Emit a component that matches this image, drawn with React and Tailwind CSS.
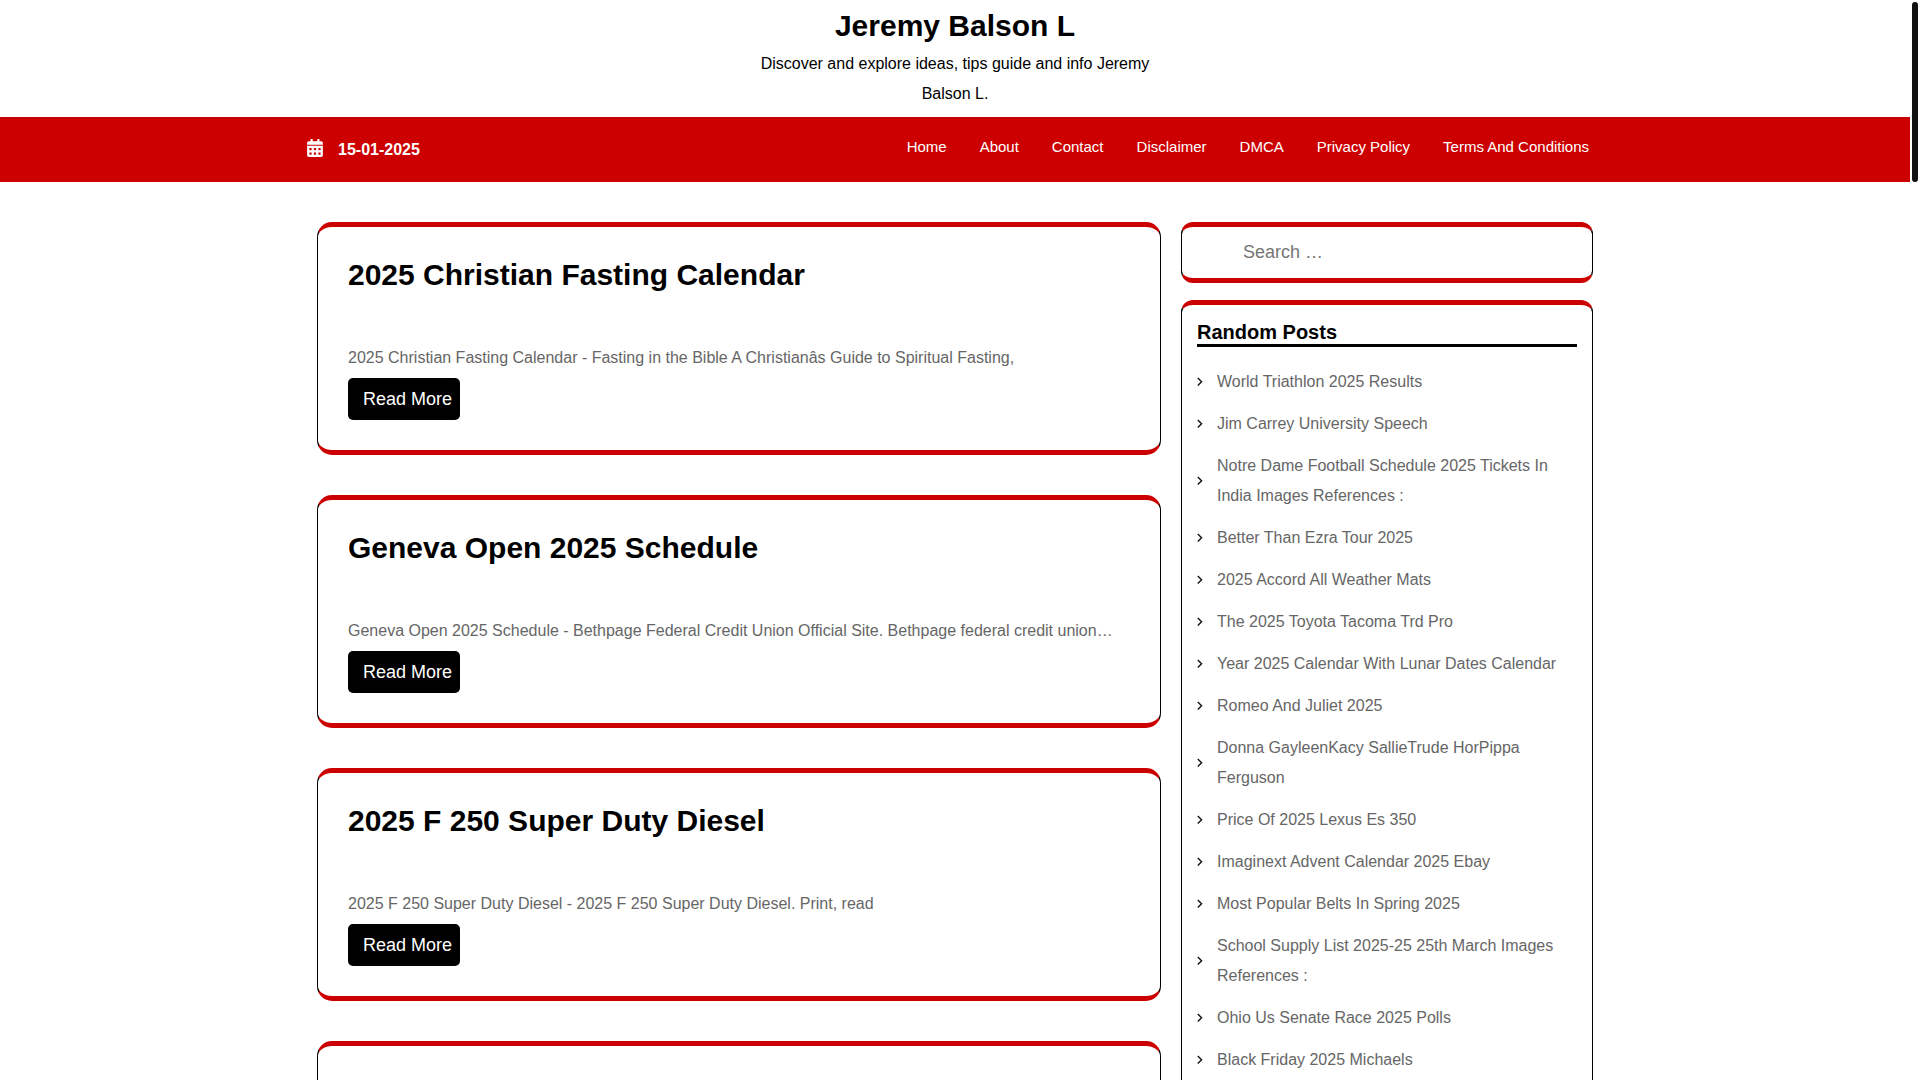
import { FaCalendarAlt } from "react-icons/fa";

const navLinks = ["Home", "About", "Contact", "Disclaimer", "DMCA", "Privacy Policy", "Terms And Conditions"];

const posts = [
  {
    title: "2025 Christian Fasting Calendar",
    excerpt: "2025 Christian Fasting Calendar - Fasting in the Bible A Christianâs Guide to Spiritual Fasting,",
  },
  {
    title: "Geneva Open 2025 Schedule",
    excerpt: "Geneva Open 2025 Schedule - Bethpage Federal Credit Union Official Site. Bethpage federal credit union…",
  },
  {
    title: "2025 F 250 Super Duty Diesel",
    excerpt: "2025 F 250 Super Duty Diesel - 2025 F 250 Super Duty Diesel. Print, read",
  },
];

const randomPosts = [
  "World Triathlon 2025 Results",
  "Jim Carrey University Speech",
  "Notre Dame Football Schedule 2025 Tickets In India Images References :",
  "Better Than Ezra Tour 2025",
  "2025 Accord All Weather Mats",
  "The 2025 Toyota Tacoma Trd Pro",
  "Year 2025 Calendar With Lunar Dates Calendar",
  "Romeo And Juliet 2025",
  "Donna GayleenKacy SallieTrude HorPippa Ferguson",
  "Price Of 2025 Lexus Es 350",
  "Imaginext Advent Calendar 2025 Ebay",
  "Most Popular Belts In Spring 2025",
  "School Supply List 2025-25 25th March Images References :",
  "Ohio Us Senate Race 2025 Polls",
  "Black Friday 2025 Michaels",
];

function Card({ as: Tag = "div", className, children }) {
  return (
    <Tag className={`border-x border-y-[5px] border-x-black border-y-[#cc0000] bg-white ${className}`}>{children}</Tag>
  );
}

function Chevron() {
  return (
    <svg viewBox="0 0 6 10" className="h-2.5 w-1.5 shrink-0" fill="none" stroke="#111" strokeWidth="1.4" aria-hidden="true">
      <path d="M0.8 1 L4.6 4.8 L0.8 8.6" />
    </svg>
  );
}

function Header() {
  return (
    <header>
      <div className="mx-auto max-w-104 py-2 text-center text-black">
        <h1 className="mb-[5px] text-[30px] leading-9 font-bold">
          <a href="#home">Jeremy Balson L</a>
        </h1>
        <p className="text-base leading-[30px]">Discover and explore ideas, tips guide and info Jeremy Balson L.</p>
      </div>
      <div className="bg-[#cc0000] text-white">
        <div className="mx-auto flex h-[65px] max-w-[1320px] items-center justify-between px-3">
          <div className="flex items-start gap-[15px]">
            <FaCalendarAlt size={18} className="w-4" aria-hidden="true" />
            <span className="text-base leading-[22px] font-bold">15-01-2025</span>
          </div>
          <nav className="pr-3.5 pb-1.5">
            <ul className="flex gap-[33px]">
              {navLinks.map((label) => (
                <li key={label}>
                  <a href="#nav" className="text-[15px]">{label}</a>
                </li>
              ))}
            </ul>
          </nav>
        </div>
      </div>
    </header>
  );
}

function Post({ title, excerpt }) {
  return (
    <Card as="article" className="rounded-[15px] p-[30px]">
      <h2 className="text-[30px] leading-9 font-bold text-black">
        <a href="#post">{title}</a>
      </h2>
      <p className="mt-[50px] text-base leading-[30px] text-[#666]">{excerpt}</p>
      <a href="#post" className="mt-[5px] flex h-[42px] w-28 items-center rounded-[5px] bg-black pl-[15px] text-lg whitespace-nowrap text-white">
        Read More
      </a>
    </Card>
  );
}

function Sidebar() {
  return (
    <aside className="flex min-w-0 flex-col gap-[17px]">
      <Card as="form" className="rounded-[12px]">
        <input
          type="search"
          aria-label="Search"
          placeholder="Search …"
          className="block h-[51px] w-full bg-transparent pr-4 pl-[61px] text-lg text-black outline-none placeholder:text-[#757575]"
        />
      </Card>
      <Card as="section" className="grow rounded-[12px] px-[15px] pt-[15px] pb-10">
        <h2 className="border-b-3 border-black text-xl leading-6 font-bold text-black">Random Posts</h2>
        <ul className="mt-5 flex flex-col gap-3">
          {randomPosts.map((post) => (
            <li key={post} className="flex items-center gap-3.5">
              <Chevron />
              <a href="#post" className="text-base leading-[30px] text-[#666]">{post}</a>
            </li>
          ))}
        </ul>
      </Card>
    </aside>
  );
}

export default function App() {
  return (
    <div className="flex h-screen overflow-hidden bg-white font-['Liberation_Sans',Arial,sans-serif]">
      <div className="min-w-0 grow overflow-hidden">
        <Header />
        <div className="mx-auto grid max-w-[1320px] grid-cols-[844fr_412fr] gap-5 px-[22px] pt-10">
          <main className="flex min-w-0 flex-col gap-10">
            {posts.map((post) => (
              <Post key={post.title} {...post} />
            ))}
            <Card as="article" className="h-[233px] rounded-[15px]" />
          </main>
          <Sidebar />
        </div>
      </div>
      <div className="w-2.5 shrink-0 p-0.5" aria-hidden="true">
        <div className="h-[calc(100vh/6)] w-1.5 rounded-full bg-[#111]" />
      </div>
    </div>
  );
}
